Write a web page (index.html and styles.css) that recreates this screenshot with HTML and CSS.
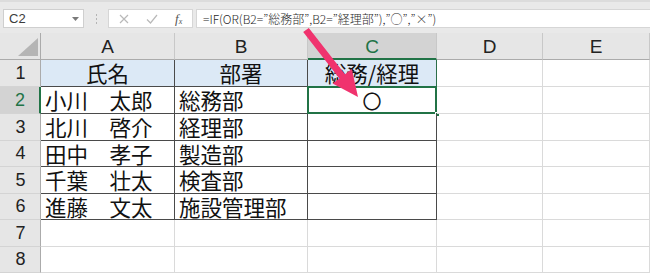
FILE: index.html
```html
<!DOCTYPE html>
<html lang="ja">
<head>
<meta charset="utf-8">
<link rel="stylesheet" href="styles.css">
</head>
<body>
<div class="app">
  <div class="toolbar">
    <div class="namebox"><span class="nb-text">C2</span><svg class="caret" width="7" height="4" viewBox="0 0 7 4"><path d="M0 0H7L3.5 4Z" fill="#7a7a7a"/></svg></div>
    <div class="grip"><i></i><i></i><i></i></div>
    <div class="fnbtns">
      <svg width="10" height="10" viewBox="0 0 10 10"><path d="M1 1L9 9M9 1L1 9" stroke="#b9b9b9" stroke-width="1.2"/></svg>
      <svg width="12" height="10" viewBox="0 0 12 10"><path d="M1 5.5L4.5 9L11 1" stroke="#b9b9b9" stroke-width="1.2" fill="none"/></svg>
      <span class="fx">f<sub>x</sub></span>
    </div>
    <div class="formula">=IF(OR(B2=”総務部”,B2=”経理部”),”○”,”×”)</div>
  </div>
  <div class="sheet">
    <div class="corner"><svg width="20" height="18" viewBox="0 0 20 18"><path d="M20 0V18H0Z" fill="#b5b5b5"/></svg></div>
    <div class="ch">A</div>
    <div class="ch">B</div>
    <div class="ch sel">C</div>
    <div class="ch">D</div>
    <div class="ch">E</div>

    <div class="rh">1</div>
    <div class="c d h ctr"><span class="t">氏名</span></div>
    <div class="c d h ctr"><span class="t">部署</span></div>
    <div class="c d h ctr g1"><span class="t">総務/経理</span></div>
    <div class="c"></div>
    <div class="c"></div>

    <div class="rh sel">2</div>
    <div class="c d"><span class="t">小川　太郎</span></div>
    <div class="c d"><span class="t">総務部</span></div>
    <div class="c d ctr active"><span class="mark">〇</span><span class="handle"></span></div>
    <div class="c"></div>
    <div class="c"></div>

    <div class="rh">3</div>
    <div class="c d"><span class="t">北川　啓介</span></div>
    <div class="c d"><span class="t">経理部</span></div>
    <div class="c d"></div>
    <div class="c"></div>
    <div class="c"></div>

    <div class="rh">4</div>
    <div class="c d"><span class="t">田中　孝子</span></div>
    <div class="c d"><span class="t">製造部</span></div>
    <div class="c d"></div>
    <div class="c"></div>
    <div class="c"></div>

    <div class="rh">5</div>
    <div class="c d"><span class="t">千葉　壮太</span></div>
    <div class="c d"><span class="t">検査部</span></div>
    <div class="c d"></div>
    <div class="c"></div>
    <div class="c"></div>

    <div class="rh">6</div>
    <div class="c d"><span class="t">進藤　文太</span></div>
    <div class="c d"><span class="t">施設管理部</span></div>
    <div class="c d"></div>
    <div class="c"></div>
    <div class="c"></div>

    <div class="rh">7</div>
    <div class="c"></div>
    <div class="c"></div>
    <div class="c"></div>
    <div class="c"></div>
    <div class="c"></div>

    <div class="rh">8</div>
    <div class="c"></div>
    <div class="c"></div>
    <div class="c"></div>
    <div class="c"></div>
    <div class="c"></div>
  </div>
  <svg class="arrow" width="650" height="273" viewBox="0 0 650 273">
    <path d="M303.2 32.1 L308.8 27.9 L345.0 74.2 L351.8 69.0 L358 97 L332.6 83.6 L339.4 78.4 Z" fill="#f0336e"/>
  </svg>
</div>
</body>
</html>
```
FILE: styles.css
```css
* { box-sizing: border-box; }
html, body { margin: 0; padding: 0; }
body {
  width: 650px;
  height: 273px;
  overflow: hidden;
  background: #ffffff;
  font-family: "Noto Sans CJK JP", "Liberation Sans", sans-serif;
}
.app {
  position: relative;
  width: 650px;
  height: 273px;
}
.toolbar {
  height: 33px;
  background: #e9e9e9;
  border-top: 2px solid #dcdcdc;
  padding: 7px 0 0 3px;
  display: flex;
  align-items: flex-start;
}
.namebox {
  width: 81px;
  height: 19px;
  background: #fff;
  border: 1px solid #cfcfcf;
  display: flex;
  align-items: center;
  justify-content: space-between;
  padding: 0 4px 0 5px;
}
.nb-text {
  font-family: "Liberation Sans", Arial, sans-serif;
  font-size: 13px;
  color: #3c3c3c;
}
.grip {
  width: 24px;
  height: 19px;
  display: flex;
  flex-direction: column;
  align-items: center;
  justify-content: center;
  gap: 2px;
}
.grip i {
  display: block;
  width: 1px;
  height: 2px;
  background: #b4b4b4;
}
.fnbtns {
  width: 85px;
  height: 19px;
  background: #fff;
  border: 1px solid #d6d6d6;
  display: flex;
  align-items: center;
  padding: 0 0 0 10px;
  gap: 17px;
}
.fx {
  font-family: "Liberation Serif", serif;
  font-style: italic;
  font-size: 13px;
  color: #555;
  line-height: 1;
}
.fx sub { font-size: 8px; vertical-align: -1px; }
.formula {
  flex: 1;
  margin-left: 3px;
  height: 19px;
  background: #fff;
  border: 1px solid #d6d6d6;
  border-right: none;
  padding-left: 6px;
  font-size: 12px;
  font-weight: 300;
  line-height: 17px;
  color: #2a2a2a;
  white-space: nowrap;
}
.sheet {
  display: grid;
  grid-template-columns: 41px 134px 133px 129px 106px 107px;
  grid-template-rows: 27px 27px 27px 27px 26px 27px 26px 27px 26px;
}
.corner {
  background: #e6e6e6;
  border-right: 1px solid #ababab;
  border-bottom: 1px solid #ababab;
  display: flex;
  align-items: flex-end;
  justify-content: flex-end;
  padding: 0 2px 3px 0;
}
.ch {
  background: #e6e6e6;
  border-right: 1px solid #c8c8c8;
  border-bottom: 1px solid #ababab;
  font-family: "Liberation Sans", Arial, sans-serif;
  font-size: 19px;
  color: #222;
  display: flex;
  align-items: center;
  justify-content: center;
  padding-top: 2px;
}
.ch.sel {
  background: #d3d3d3;
  color: #217346;
  border-bottom: 2px solid #217346;
}
.rh {
  background: #e6e6e6;
  border-right: 1px solid #ababab;
  border-bottom: 1px solid #d4d4d4;
  font-family: "Liberation Sans", Arial, sans-serif;
  font-size: 18px;
  color: #222;
  display: flex;
  align-items: center;
  justify-content: center;
  padding-left: 1px;
}
.rh.sel {
  background: #d3d3d3;
  color: #217346;
  border-right: 2px solid #217346;
}
.c {
  position: relative;
  border-right: 1px solid #dadada;
  border-bottom: 1px solid #dadada;
  font-size: 21.5px;
  color: #111;
  display: flex;
  align-items: center;
  padding: 0 0 0 4px;
  white-space: nowrap;
}
.t {
  display: block;
  line-height: 22px;
}
.c.d {
  border-right: 1px solid #4a4a4a;
  border-bottom: 1px solid #4a4a4a;
}
.c.h {
  background: #dce9f6;
}
.ctr {
  justify-content: center;
  padding: 0;
}
.c.g1 {
  border-right-color: #2b6e48;
  border-bottom-color: #2b6e48;
}
.c.active {
  border: none;
  box-shadow: inset 0 0 0 2px #217346;
  margin: -1px 0 0 -1px;
}
.mark {
  display: block;
  font-size: 19px;
  line-height: 20px;
  margin-top: 1px;
}
.handle {
  position: absolute;
  right: -3px;
  bottom: -3px;
  width: 5px;
  height: 5px;
  background: #217346;
  border: 1px solid #fff;
}
.arrow {
  position: absolute;
  left: 0;
  top: 0;
  pointer-events: none;
}
```
